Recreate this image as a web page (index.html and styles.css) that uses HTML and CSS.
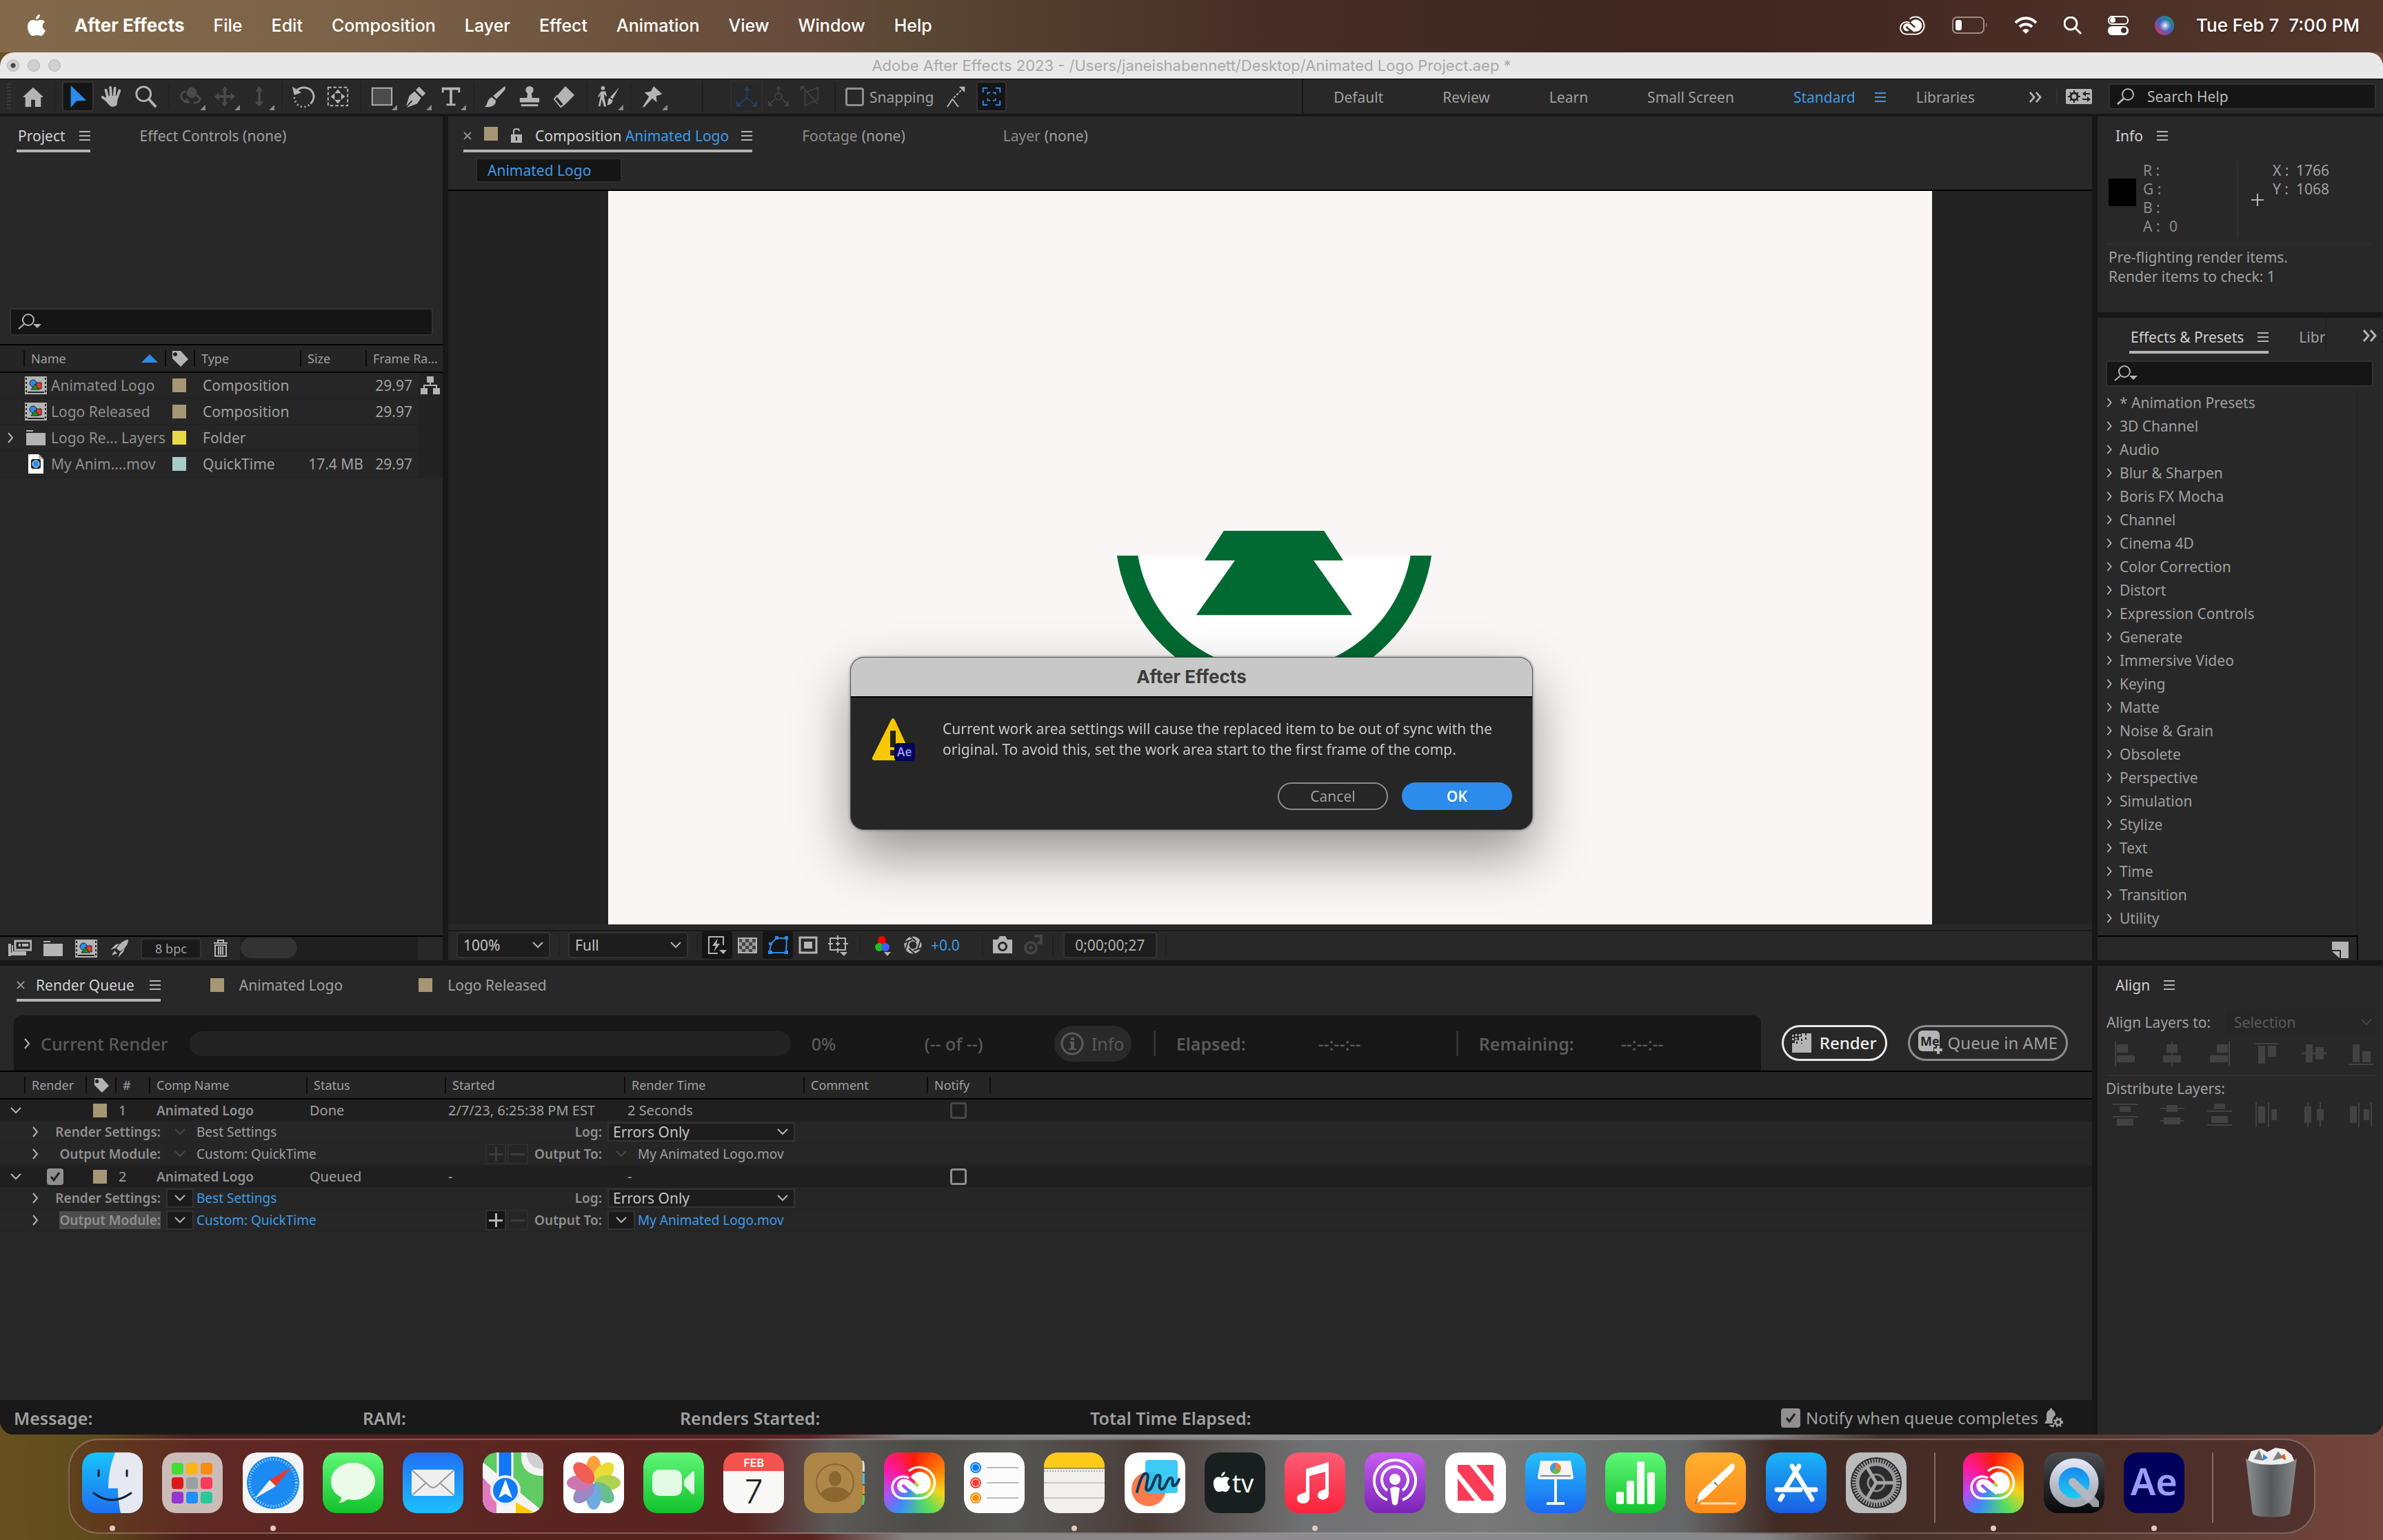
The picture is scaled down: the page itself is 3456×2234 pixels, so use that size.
FILE: index.html
```html
<!DOCTYPE html>
<html lang="en">
<head>
<meta charset="utf-8">
<meta name="viewport" content="width=device-width, initial-scale=1">
<title>Adobe After Effects 2023</title>
<link rel="stylesheet" href="styles.css">
</head>
<body>

<!-- shared icons -->
<svg class="sprite" aria-hidden="true">
  <mask id="cuts"><rect width="60" height="46" fill="#fff"/><path d="M16 27l15 13M19 13l15 13" stroke="#000" stroke-width="4" stroke-linecap="round"/></mask>
  <symbol id="burger" viewBox="0 0 16 16"><path d="M0 1h16v2H0zM0 7h16v2H0zM0 13h16v2H0z" fill="currentColor"/></symbol>
  <symbol id="right" viewBox="0 0 12 16"><path d="M3 1l6 7-6 7" fill="none" stroke="currentColor" stroke-width="2"/></symbol>
  <symbol id="down" viewBox="0 0 16 12"><path d="M1 2l7 7 7-7" fill="none" stroke="currentColor" stroke-width="2"/></symbol>
  <symbol id="more" viewBox="0 0 22 18"><path d="M2 1l7 8-7 8M12 1l7 8-7 8" fill="none" stroke="currentColor" stroke-width="3"/></symbol>
  <symbol id="close" viewBox="0 0 12 12"><path d="M1 1l10 10M11 1L1 11" stroke="currentColor" stroke-width="2"/></symbol>
  <symbol id="tag" viewBox="0 0 24 24"><path fill-rule="evenodd" fill="currentColor" d="M1 1h12l11 12-11 11L1 12zM5 3a3 3 0 1 0 .1 0z"/></symbol>
  <symbol id="find" viewBox="0 0 34 24"><circle cx="15" cy="9" r="8" fill="none" stroke="currentColor" stroke-width="2"/><path d="M9 15l-8 7" stroke="currentColor" stroke-width="2"/><path d="M22 15h12l-6 6z" fill="currentColor"/></symbol>
  <symbol id="comp" viewBox="0 0 32 26"><path fill="#b4b4b4" d="M0 0h32v26H0z"/><path d="M2 2v22M30 2v22" stroke="#222" stroke-width="2" stroke-dasharray="3 3"/><path d="M4 23h24" stroke="#222" stroke-width="2"/><path fill="#e33" stroke="#222" d="M15 9h9v9h-9z"/><circle cx="12" cy="10" r="5" fill="#2d8ceb" stroke="#222"/><path fill="#1a8f1a" stroke="#222" d="M15 11l6 8H9z"/></symbol>
  <symbol id="folder" viewBox="0 0 28 22"><path fill="#b4b4b4" d="M0 0h10v2h-10zM0 4h28v18H0z"/></symbol>
  <symbol id="cloud" viewBox="0 0 60 46"><path d="M23 8a20 20 0 1 1 15 35H16a14 14 0 1 1 7-26" fill="none" stroke="#fff" stroke-width="3"/><g mask="url(#cuts)"><circle cx="17" cy="27" r="9" fill="#fff"/><circle cx="37" cy="23" r="14" fill="#fff"/><path d="M18 22l18 13" stroke="#fff" stroke-width="8"/></g></symbol>
  <symbol id="apple" viewBox="0 0 26 32"><path fill="currentColor" d="M18 0c0 4-3 7-6 7 0-4 3-7 6-7zM13 9c2 0 4-2 7-1 2 0 4 1 5 3-5 3-4 10 1 12-2 5-4 8-7 8-2 0-3-1-5-1s-4 1-6 1C3 31 0 23 0 18 0 11 4 8 8 8c2 0 4 1 5 1z"/></symbol>
</svg>

<header class="menubar">
  <nav class="menus">
    <button aria-label="Apple menu"><svg width="26" height="32"><use href="#apple"/></svg></button>
    <button class="app">After Effects</button>
    <button>File</button>
    <button>Edit</button>
    <button>Composition</button>
    <button>Layer</button>
    <button>Effect</button>
    <button>Animation</button>
    <button>View</button>
    <button>Window</button>
    <button>Help</button>
  </nav>
  <div class="status">
    <svg width="38" height="30" viewBox="0 0 60 46"><use href="#cloud"/></svg>
    <svg width="52" height="26" viewBox="0 0 52 26"><rect x="1" y="1" width="45" height="23" rx="6" fill="none" stroke="#a08b82" stroke-width="2"/><rect x="5" y="5" width="9" height="15" rx="3" fill="#fff"/><path d="M49 9q3 3 0 7z" fill="#a08b82"/></svg>
    <svg width="34" height="26" viewBox="0 0 34 26"><g fill="none" stroke="#fff" stroke-width="4"><path d="M2 9c9-9 21-9 30 0"/><path d="M8 15c5-5 13-5 18 0"/></g><path fill="#fff" d="M17 25l-5-5q5-4 10 0z"/></svg>
    <svg width="26" height="26" viewBox="0 0 26 26"><circle cx="10" cy="10" r="9" fill="none" stroke="#fff" stroke-width="3"/><path d="M17 17l8 8" stroke="#fff" stroke-width="3"/></svg>
    <svg width="30" height="28" viewBox="0 0 30 28"><rect x="1" y="1" width="28" height="11" rx="5" fill="none" stroke="#fff" stroke-width="2"/><circle cx="7" cy="6" r="4" fill="#fff"/><rect y="15" width="30" height="13" rx="6" fill="#fff"/><circle cx="23" cy="21" r="4" fill="#432a24"/></svg>
    <svg width="28" height="28" viewBox="0 0 28 28"><defs><linearGradient id="siri" x1="0" y1="1" x2="1" y2="0"><stop offset="0" stop-color="#e8305a"/><stop offset=".5" stop-color="#465ec0"/><stop offset="1" stop-color="#0fa06a"/></linearGradient><radialGradient id="glow"><stop offset="0" stop-color="#fff"/><stop offset="1" stop-color="#8fd0f4" stop-opacity="0"/></radialGradient></defs><circle cx="14" cy="14" r="14" fill="url(#siri)"/><circle cx="15" cy="14" r="9" fill="url(#glow)"/></svg>
    <time>Tue Feb 7&nbsp; 7:00 PM</time>
  </div>
</header>

<main class="window">
  <div class="titlebar">
    <div class="lights"><i class="edited"></i><i></i><i></i></div>
    <h1>Adobe After Effects 2023 - /Users/janeishabennett/Desktop/Animated Logo Project.aep *</h1>
  </div>

  <div class="toolbar">
    <span class="grip"></span>
    <div class="tools">
      <button aria-label="Home"><svg viewBox="0 0 36 36"><path d="M18 4L2 19h4v15h9V23h6v11h9V19h4z"/></svg></button>
    </div>
    <div class="tools">
      <button class="on" aria-label="Selection"><svg viewBox="0 0 36 36"><path fill="#2d8ceb" d="M7 1l24 23-15 1-9 10z"/></svg></button>
      <button aria-label="Hand"><svg viewBox="0 0 36 36"><g fill="none" stroke="#b4b4b4" stroke-width="4" stroke-linecap="round"><path d="M12 20L9 8M17 18L16 4M22 18l1-13M26 20l4-11M12 25l-8-6"/></g><path d="M10 17h18l-2 14q-7 6-12 0l-7-8z"/></svg></button>
      <button aria-label="Zoom"><svg viewBox="0 0 36 36"><circle cx="14" cy="14" r="11" fill="none" stroke="#b4b4b4" stroke-width="3"/><path d="M22 22l11 12" stroke="#b4b4b4" stroke-width="4"/></svg></button>
    </div>
    <div class="tools dim">
      <button class="fly" aria-label="Orbit camera"><svg viewBox="0 0 36 36"><circle cx="20" cy="12" r="8"/><path d="M11 10c-10 3-10 10 0 17M27 16c8 4 8 11-4 12" fill="none" stroke="#4a4a4a" stroke-width="3"/><path d="M8 28h10l-6-8z"/></svg></button>
      <button class="fly" aria-label="Pan camera"><svg viewBox="0 0 36 36"><path d="M18 2l5 7h-3v7h7v-4l7 6-7 6v-4h-7v7h3l-5 7-5-7h3v-7H9v4l-7-6 7-6v4h7V9h-3z"/></svg></button>
      <button class="fly" aria-label="Dolly camera"><svg viewBox="0 0 36 36"><path d="M18 2l6 8h-4v16h5l-7 8-7-8h5V10h-4z"/></svg></button>
    </div>
    <div class="tools">
      <button aria-label="Rotation"><svg viewBox="0 0 36 36"><path d="M6 11c8-11 26-8 28 6 0 6-2 9-5 12" fill="none" stroke="#b4b4b4" stroke-width="3"/><path d="M1 3l3 13 11-4z"/><path d="M27 31C17 38 5 32 4 19" fill="none" stroke="#b4b4b4" stroke-width="3" stroke-dasharray="2 4"/></svg></button>
      <button aria-label="Pan behind"><svg viewBox="0 0 36 36"><rect x="3" y="4" width="30" height="28" fill="none" stroke="#b4b4b4" stroke-width="2" stroke-dasharray="5 3"/><path d="M18 7l5 6H13zM18 29l5-6H13zM7 18l6-5v10zM29 18l-6-5v10z"/></svg></button>
    </div>
    <div class="tools">
      <button class="fly" aria-label="Rectangle"><svg viewBox="0 0 36 36"><rect x="3" y="5" width="30" height="26" fill="#4b4b4b" stroke="#b4b4b4" stroke-width="2"/></svg></button>
      <button class="fly" aria-label="Pen"><svg viewBox="0 0 36 36"><path d="M22 3l10 10-5 5-10-10zM15 10l10 10-6 9-16 6 9-10-2-1-8 9 5-16z"/></svg></button>
      <button class="fly" aria-label="Type"><svg viewBox="0 0 36 36"><path d="M4 4h28v8h-3V8h-9v21h5v3H11v-3h5V8H7v4H4z"/></svg></button>
    </div>
    <div class="tools">
      <button aria-label="Brush"><svg viewBox="0 0 36 36"><path d="M33 2q2 3-1 7L20 22l-5-5zM13 19l6 5c1 8-8 11-17 10 5-3 3-12 11-15z"/></svg></button>
      <button aria-label="Clone stamp"><svg viewBox="0 0 36 36"><circle cx="18" cy="8" r="6"/><path d="M15 12h6l1 8h11v7H3v-7h11zM5 30h26v3H5z"/></svg></button>
      <button aria-label="Eraser"><svg viewBox="0 0 36 36"><path d="M20 2l14 14-15 15L7 17z"/><path d="M7 17l11 13-5 4L3 22z" fill="none" stroke="#b4b4b4" stroke-width="2"/></svg></button>
    </div>
    <div class="tools">
      <button class="fly" aria-label="Roto brush"><svg viewBox="0 0 36 36"><circle cx="10" cy="5" r="3"/><path d="M7 10h7l2 7-1 1-3-4v6l3 13-3 1-4-12-2 11H3l3-14v-5l-2 5-2-1z"/><path d="M35 4L25 22l-4-3zM20 20l5 4c-1 6-6 7-9 7 3-3 0-8 4-11z"/></svg></button>
    </div>
    <div class="tools">
      <button class="fly" aria-label="Puppet pin"><svg viewBox="0 0 36 36"><path d="M20 2l13 12-4 2-5 1 1 10-7-6L6 34l-3 1 2-4 8-13-7-6 10-2z"/></svg></button>
    </div>
    <div class="axes">
      <button class="axis" aria-label="Local axis"><svg viewBox="0 0 36 36" class="navy"><path d="M18 4v16L5 31M18 20l13 11" fill="none" stroke="#1d4166" stroke-width="2"/><path d="M13 9l5-7 5 7zM2 25v9h9zM34 25v9h-9z"/></svg></button>
      <button aria-label="World axis"><svg viewBox="0 0 36 36" class="faint"><path d="M18 4v10M12 22l-8 8M24 22l8 8" stroke="#404040" stroke-width="2"/><circle cx="18" cy="18" r="5" fill="none" stroke="#404040" stroke-width="2"/><path d="M14 7l4-6 4 6zM2 24v9h8zM34 24v9h-8z"/></svg></button>
      <button aria-label="View axis"><svg viewBox="0 0 36 36" class="faint"><path d="M10 12L30 4v18L10 32zM5 2l25 28" fill="none" stroke="#404040" stroke-width="2"/><path d="M2 2h8l-7 8z"/></svg></button>
    </div>
    <div class="snap">
      <input type="checkbox" id="snapping"><label for="snapping">Snapping</label>
      <button aria-label="Snap edges"><svg viewBox="0 0 36 36"><path d="M4 34l8-12 9 12" fill="none" stroke="#b4b4b4" stroke-width="2"/><path d="M14 20L28 6" stroke="#b4b4b4" stroke-width="2" stroke-dasharray="4 2"/><path d="M22 3h9v9z"/></svg></button>
      <button class="on" aria-label="Snap to features"><svg viewBox="0 0 36 36"><g fill="none" stroke="#2d8ceb" stroke-width="2"><path d="M5 12V5h7M24 5h7v7M31 24v7h-7M12 31H5v-7"/><path d="M12 15v-3h4M20 12h4v3M24 21v3h-4M16 24h-4v-3"/></g></svg></button>
    </div>
    <nav class="workspaces">
      <button>Default</button>
      <button>Review</button>
      <button>Learn</button>
      <button>Small Screen</button>
      <button class="current">Standard <svg width="16" height="16"><use href="#burger"/></svg></button>
      <button class="last">Libraries</button>
      <button class="overflow" aria-label="More workspaces"><svg width="20" height="16"><use href="#more"/></svg></button>
    </nav>
    <button class="sync" aria-label="Workspace settings"><svg width="38" height="22" viewBox="0 0 38 22"><rect width="38" height="22" rx="2" fill="#b4b4b4"/><circle cx="12" cy="11" r="5" fill="none" stroke="#222" stroke-width="3"/><path d="M12 2v4M12 16v4M3 11h4M17 11h4M6 5l3 3M15 14l3 3M18 5l-3 3M9 14l-3 3" stroke="#222" stroke-width="2"/><path d="M35 7h-8M24 15h8" stroke="#222" stroke-width="2"/><path d="M29 3v8l-5-4zM31 11v8l5-4z" fill="#222"/></svg></button>
    <label class="searchbox help">
      <svg width="26" height="24" viewBox="0 0 26 24"><circle cx="16" cy="9" r="8" fill="none" stroke="#b4b4b4" stroke-width="2"/><path d="M10 15l-9 8" stroke="#b4b4b4" stroke-width="3"/></svg>
      <input type="search" placeholder="Search Help" aria-label="Search Help">
    </label>
  </div>

  <div class="workarea">
    <section class="panel project">
      <div class="tabs">
        <button class="tab active">Project <svg width="16" height="16"><use href="#burger"/></svg></button>
        <button class="tab wide">Effect Controls (none)</button>
      </div>
      <div class="blank"></div>
      <label class="searchbox">
        <svg width="34" height="24"><use href="#find"/></svg>
        <input type="search" aria-label="Search project">
      </label>
      <table class="files">
        <colgroup><col class="c-twirl"><col class="c-name"><col class="c-label"><col class="c-type"><col class="c-size"><col class="c-rate"><col></colgroup>
        <thead>
          <tr>
            <th></th>
            <th><span class="sort">Name <svg width="24" height="12" viewBox="0 0 24 12"><path fill="#2d8ceb" d="M12 0l12 12H0z"/></svg></span></th>
            <th class="tagcell"><svg width="24" height="24"><use href="#tag"/></svg></th>
            <th>Type</th>
            <th>Size</th>
            <th colspan="2">Frame Ra...</th>
          </tr>
        </thead>
        <tbody>
          <tr>
            <td></td>
            <td><span class="file"><svg width="32" height="26"><use href="#comp"/></svg>Animated Logo</span></td>
            <td class="tagcell"><i class="swatch"></i></td>
            <td>Composition</td><td></td><td class="num">29.97</td>
            <td class="flow"><svg width="28" height="26" viewBox="0 0 28 26"><path fill="#b4b4b4" d="M9 0h10v9H9zM0 17h10v9H0zM18 17h10v9H18z"/><path d="M14 8v5M5 18v-5h18v5" fill="none" stroke="#b4b4b4" stroke-width="2"/></svg></td>
          </tr>
          <tr>
            <td></td>
            <td><span class="file"><svg width="32" height="26"><use href="#comp"/></svg>Logo Released</span></td>
            <td class="tagcell"><i class="swatch"></i></td>
            <td>Composition</td><td></td><td class="num">29.97</td><td class="flow"></td>
          </tr>
          <tr>
            <td class="twirl"><svg width="12" height="16"><use href="#right"/></svg></td>
            <td><span class="file"><svg width="32" height="22" viewBox="-2 0 32 22"><path fill="#b4b4b4" d="M0 0h10v2H0zM0 4h28v18H0z"/></svg>Logo Re... Layers</span></td>
            <td class="tagcell"><i class="swatch yellow"></i></td>
            <td>Folder</td><td></td><td></td><td class="flow"></td>
          </tr>
          <tr>
            <td></td>
            <td><span class="file"><svg width="32" height="28" viewBox="-4 0 32 28"><path fill="#fff" d="M1 0h15l7 7v21H1z"/><path fill="#bbb" d="M16 0l7 7h-7z"/><rect x="5" y="7" width="14" height="14" rx="3" fill="#222"/><circle cx="12" cy="14" r="5" fill="#2d8ceb" stroke="#dff"/></svg>My Anim....mov</span></td>
            <td class="tagcell"><i class="swatch aqua"></i></td>
            <td>QuickTime</td><td class="size">17.4 MB</td><td class="num">29.97</td><td class="flow"></td>
          </tr>
        </tbody>
      </table>
      <div class="files-rest"></div>
      <div class="project-foot">
        <button aria-label="Interpret footage"><svg width="34" height="26" viewBox="0 0 34 26"><rect x="10" y="2" width="23" height="13" fill="none" stroke="#b4b4b4" stroke-width="3"/><path d="M15 8h3M20 8h9M2 6v18M2 21h24" stroke="#b4b4b4" stroke-width="4"/><path d="M6 8v10h20" fill="none" stroke="#b4b4b4" stroke-width="2"/></svg></button>
        <button aria-label="New folder"><svg width="28" height="22"><use href="#folder"/></svg></button>
        <button aria-label="New composition"><svg width="34" height="26"><use href="#comp"/></svg></button>
        <button aria-label="Project settings"><svg width="28" height="26" viewBox="0 0 28 26"><path fill="#b4b4b4" d="M27 0c0 8-5 13-12 17l-5-4C14 6 20 1 27 0zM9 12l-8 3 8-8 5-1zM15 19l-3 7 8-8 2-6zM7 16l4 4-8 3z"/></svg></button>
        <button class="bpc">8 bpc</button>
        <button aria-label="Delete"><svg width="22" height="26" viewBox="0 0 22 26"><path d="M1 5h20M7 5V1h8v4M3 8h16v16H3zM8 10v12M14 10v12M11 10v12" fill="none" stroke="#b4b4b4" stroke-width="2"/></svg></button>
        <div class="hscroll"><i></i></div>
      </div>
    </section>

    <section class="panel viewer">
      <div class="tabs">
        <button class="tab active comp-tab"><svg width="12" height="12"><use href="#close"/></svg><i class="swatch"></i><svg width="18" height="22" viewBox="0 0 18 22"><path fill-rule="evenodd" fill="#b4b4b4" d="M1 9h16v12H1zM8 12v6h2v-6z"/><path d="M5 9V4q0-3 4-3t4 3" fill="none" stroke="#b4b4b4" stroke-width="2"/></svg><span>Composition <b>Animated Logo</b></span><svg width="16" height="16"><use href="#burger"/></svg></button>
        <button class="tab wide footage">Footage <em>(none)</em></button>
        <button class="tab wide layer">Layer <em>(none)</em></button>
      </div>
      <div class="crumbs"><button>Animated Logo</button></div>
      <div class="stage">
        <svg class="canvas" viewBox="0 0 1920 1062" preserveAspectRatio="xMidYMid slice">
          <rect width="1920" height="1062" fill="#f9f6f5"/>
          <clipPath id="lower"><path d="M600 528h800v400H600z"/></clipPath>
          <circle cx="966" cy="495" r="215" fill="#fff" stroke="#006a32" stroke-width="30" clip-path="url(#lower)"/>
          <path fill="#006a32" d="M893 492h145l28 43h-43l56 79H853l56-79h-44z"/>
        </svg>
      </div>
      <div class="viewer-foot">
        <select class="zoom" aria-label="Magnification"><option>100%</option></select>
        <i class="bar"></i>
        <select class="res" aria-label="Resolution"><option>Full</option></select>
        <i class="bar"></i>
        <button class="pressed" aria-label="Fast previews"><svg viewBox="0 0 32 32"><path d="M25 16V4H4v24h13" fill="none" stroke="#b4b4b4" stroke-width="2"/><path fill="#b4b4b4" d="M17 6l-8 11h5l-3 9 9-12h-5zM19 23h11l-5 6z"/></svg></button>
        <button aria-label="Transparency grid"><svg viewBox="0 0 32 32"><rect x="3" y="6" width="26" height="21" fill="#444" stroke="#b4b4b4" stroke-width="2"/><path fill="#999" d="M8 7h5v5H8zM18 7h5v5h-5zM4 12h4v5H4zM13 12h5v5h-5zM23 12h5v5h-5zM8 17h5v5H8zM18 17h5v5h-5zM4 22h4v4H4zM13 22h5v4h-5zM23 22h5v4h-5z"/></svg></button>
        <button class="pressed" aria-label="Masks"><svg viewBox="0 0 32 32"><path d="M4 27l2-13 8-8h15l-1 21z" fill="none" stroke="#2d8ceb" stroke-width="2"/><path fill="#2d8ceb" d="M2 24h6v5H2zM26 24h5v5h-5zM26 3h5v5h-5zM12 3h5v5h-5zM3 12h5v4H3z"/></svg></button>
        <button aria-label="Region of interest"><svg viewBox="0 0 32 32"><rect x="4" y="5" width="24" height="22" fill="none" stroke="#b4b4b4" stroke-width="3"/><path fill="#b4b4b4" d="M10 11h12v10H10z"/></svg></button>
        <button aria-label="Guides"><svg viewBox="0 0 32 32"><path d="M4 6h22v17H4zM15 2v7M15 20v7M1 14h7M23 14h7M12 14h6M15 11v6" fill="none" stroke="#b4b4b4" stroke-width="2"/><path fill="#b4b4b4" d="M18 26h11l-5 6z"/></svg></button>
        <i class="bar wide"></i>
        <button aria-label="Channels"><svg viewBox="0 0 32 32"><circle cx="15" cy="9" r="6" fill="#f00"/><circle cx="11" cy="19" r="6" fill="#1fc01f"/><circle cx="20" cy="19" r="6" fill="#3f5fff"/><path fill="#b4b4b4" d="M18 26h10l-5 6z"/></svg></button>
        <button aria-label="Reset exposure"><svg viewBox="0 0 32 32"><circle cx="16" cy="16" r="9" fill="none" stroke="#b4b4b4" stroke-width="7"/><path d="M12 3l9 8M27 9l-4 12M29 20l-12 4M19 29l-9-8M5 23l4-12M4 12l11-4" stroke="#282828" stroke-width="2"/></svg></button>
        <a href="#" class="expo">+0.0</a>
        <i class="bar"></i>
        <button aria-label="Snapshot"><svg viewBox="0 0 32 32"><path fill-rule="evenodd" fill="#b4b4b4" d="M2 8h7l3-5h8l3 5h7v20H2zM16 11a7 7 0 1 0 .1 0z"/><circle cx="16" cy="18" r="4" fill="#b4b4b4"/></svg></button>
        <button aria-label="Show snapshot"><svg viewBox="0 0 32 32"><circle cx="13" cy="20" r="8" fill="none" stroke="#444" stroke-width="4"/><circle cx="13" cy="20" r="3" fill="#444"/><path d="M18 3h10v10h-6" fill="none" stroke="#444" stroke-width="4"/></svg></button>
        <i class="bar"></i>
        <button class="timecode">0;00;00;27</button>
        <i class="bar"></i>
      </div>
    </section>

    <section class="panel info">
      <div class="tabs"><button class="tab solo">Info <svg width="16" height="16"><use href="#burger"/></svg></button></div>
      <div class="readout">
        <i class="black"></i>
        <dl class="rgba"><dt>R :</dt><dd></dd><dt>G :</dt><dd></dd><dt>B :</dt><dd></dd><dt>A :</dt><dd>0</dd></dl>
        <svg class="cross" width="18" height="18" viewBox="0 0 18 18"><path d="M9 0v18M0 9h18" stroke="#b4b4b4" stroke-width="2"/></svg>
        <dl class="xy"><dt>X :</dt><dd>1766</dd><dt>Y :</dt><dd>1068</dd></dl>
      </div>
      <p>Pre-flighting render items.<br>Render items to check: 1</p>
    </section>

    <section class="panel effects">
      <div class="tabs">
        <button class="tab active">Effects &amp; Presets <svg width="16" height="16"><use href="#burger"/></svg></button>
        <button class="tab cut">Libr</button>
        <button class="overflow" aria-label="More panels"><svg width="22" height="18"><use href="#more"/></svg></button>
      </div>
      <label class="searchbox">
        <svg width="34" height="24"><use href="#find"/></svg>
        <input type="search" aria-label="Search effects">
      </label>
      <ul class="effect-list">
        <li><svg><use href="#right"/></svg>* Animation Presets</li>
        <li><svg><use href="#right"/></svg>3D Channel</li>
        <li><svg><use href="#right"/></svg>Audio</li>
        <li><svg><use href="#right"/></svg>Blur &amp; Sharpen</li>
        <li><svg><use href="#right"/></svg>Boris FX Mocha</li>
        <li><svg><use href="#right"/></svg>Channel</li>
        <li><svg><use href="#right"/></svg>Cinema 4D</li>
        <li><svg><use href="#right"/></svg>Color Correction</li>
        <li><svg><use href="#right"/></svg>Distort</li>
        <li><svg><use href="#right"/></svg>Expression Controls</li>
        <li><svg><use href="#right"/></svg>Generate</li>
        <li><svg><use href="#right"/></svg>Immersive Video</li>
        <li><svg><use href="#right"/></svg>Keying</li>
        <li><svg><use href="#right"/></svg>Matte</li>
        <li><svg><use href="#right"/></svg>Noise &amp; Grain</li>
        <li><svg><use href="#right"/></svg>Obsolete</li>
        <li><svg><use href="#right"/></svg>Perspective</li>
        <li><svg><use href="#right"/></svg>Simulation</li>
        <li><svg><use href="#right"/></svg>Stylize</li>
        <li><svg><use href="#right"/></svg>Text</li>
        <li><svg><use href="#right"/></svg>Time</li>
        <li><svg><use href="#right"/></svg>Transition</li>
        <li><svg><use href="#right"/></svg>Utility</li>
      </ul>
      <div class="effects-foot"><button aria-label="New preset"><svg width="24" height="24" viewBox="0 0 24 24"><path fill="#b4b4b4" d="M0 0h24v24H13V12H0zM0 14h11v10z"/></svg></button></div>
    </section>

    <section class="panel queue">
      <div class="tabs">
        <button class="tab active queue-tab"><svg width="12" height="12"><use href="#close"/></svg>Render Queue <svg width="16" height="16"><use href="#burger"/></svg></button>
        <button class="tab comp-name"><i class="swatch"></i>Animated Logo</button>
        <button class="tab comp-name"><i class="swatch"></i>Logo Released</button>
      </div>
      <div class="current-render">
        <div class="progress">
          <svg width="12" height="16"><use href="#right"/></svg>
          <b class="title">Current Render</b>
          <div class="track"></div>
          <b class="pct">0%</b>
          <b class="count">(-- of --)</b>
          <button class="pill" disabled><svg width="36" height="36" viewBox="0 0 36 36"><circle cx="18" cy="18" r="15" fill="none" stroke="#5a5a5a" stroke-width="3"/><path d="M16 9h5v4h-5zM14 15h7v10h3v2H13v-2h3v-8h-2z" fill="#5a5a5a"/></svg>Info</button>
          <i class="rule"></i>
          <b class="elapsed">Elapsed:</b><b class="clock">--:--:--</b>
          <i class="rule"></i>
          <b class="elapsed">Remaining:</b><b class="clock">--:--:--</b>
        </div>
        <button class="render"><svg width="28" height="28" viewBox="0 0 28 28"><path fill="#b4b4b4" d="M14 0h14v28H0V14h4v-4h6V5h4z"/><path d="M1 2v10M6 1v8M11 1v4" stroke="#b4b4b4" stroke-width="3" stroke-dasharray="3 2"/><path d="M20 0v9M14 8v7M7 12v6" stroke="#222" stroke-width="2" stroke-dasharray="3 3"/></svg>Render</button>
        <button class="ame"><svg width="36" height="36" viewBox="0 0 36 36"><rect width="31" height="30" rx="6" fill="#b4b4b4"/><text x="3" y="22" font-size="18" font-weight="700" fill="#222">Me</text><path d="M29 21v14M22 28h14" stroke="#282828" stroke-width="8"/><path d="M29 22v12M23 28h12" stroke="#b4b4b4" stroke-width="4"/></svg>Queue in AME</button>
      </div>
      <table class="jobs">
        <colgroup><col class="j-twirl"><col class="j-render"><col class="j-label"><col class="j-no"><col class="j-name"><col class="j-status"><col class="j-start"><col class="j-time"><col class="j-comment"><col class="j-notify"><col></colgroup>
        <thead>
          <tr><th></th><th>Render</th><th class="tagcell"><svg width="22" height="22"><use href="#tag"/></svg></th><th>#</th><th>Comp Name</th><th>Status</th><th>Started</th><th>Render Time</th><th>Comment</th><th>Notify</th><th></th></tr>
        </thead>
        <tbody>
          <tr class="item">
            <td class="twirl"><svg width="16" height="12"><use href="#down"/></svg></td><td></td><td class="tagcell"><i class="swatch"></i></td><td>1</td><td><b>Animated Logo</b></td><td>Done</td><td>2/7/23, 6:25:38 PM EST</td><td>2 Seconds</td><td></td>
            <td class="box"><input type="checkbox" disabled aria-label="Notify for item 1"></td><td></td>
          </tr>
          <tr><td colspan="11"><div class="sub">
            <svg width="12" height="16"><use href="#right"/></svg><b>Render Settings:</b>
            <span class="choice"><button class="mini off" disabled aria-label="Render settings"><svg width="16" height="12"><use href="#down"/></svg></button>Best Settings</span>
            <span class="out"><label for="log1">Log:</label></span><select id="log1"><option>Errors Only</option></select>
          </div></td></tr>
          <tr><td colspan="11"><div class="sub">
            <svg width="12" height="16"><use href="#right"/></svg><b>Output Module:</b>
            <span class="choice"><button class="mini off" disabled aria-label="Output module"><svg width="16" height="12"><use href="#down"/></svg></button>Custom: QuickTime</span>
            <span class="out"><button class="step off" disabled aria-label="Add output"><i class="plus"></i></button><button class="step off" disabled aria-label="Remove output"><i class="minus"></i></button><b>Output To:</b></span>
            <span class="choice"><button class="mini off" disabled aria-label="Output path"><svg width="16" height="12"><use href="#down"/></svg></button>My Animated Logo.mov</span>
          </div></td></tr>
          <tr class="item">
            <td class="twirl"><svg width="16" height="12"><use href="#down"/></svg></td><td class="check"><input type="checkbox" checked aria-label="Render item 2"></td><td class="tagcell"><i class="swatch"></i></td><td>2</td><td><b>Animated Logo</b></td><td>Queued</td><td>-</td><td>-</td><td></td>
            <td class="box"><input type="checkbox" aria-label="Notify for item 2"></td><td></td>
          </tr>
          <tr><td colspan="11"><div class="sub">
            <svg width="12" height="16"><use href="#right"/></svg><b>Render Settings:</b>
            <span class="choice"><button class="mini" aria-label="Render settings"><svg width="16" height="12"><use href="#down"/></svg></button><a href="#">Best Settings</a></span>
            <span class="out"><label for="log2">Log:</label></span><select id="log2"><option>Errors Only</option></select>
          </div></td></tr>
          <tr><td colspan="11"><div class="sub">
            <svg width="12" height="16"><use href="#right"/></svg><b class="picked">Output Module:</b>
            <span class="choice"><button class="mini" aria-label="Output module"><svg width="16" height="12"><use href="#down"/></svg></button><a href="#">Custom: QuickTime</a></span>
            <span class="out"><button class="step" aria-label="Add output"><i class="plus"></i></button><button class="step off" disabled aria-label="Remove output"><i class="minus"></i></button><b>Output To:</b></span>
            <span class="choice"><button class="mini" aria-label="Output path"><svg width="16" height="12"><use href="#down"/></svg></button><a href="#">My Animated Logo.mov</a></span>
          </div></td></tr>
        </tbody>
      </table>
      <div class="queue-foot">
        <b>Message:</b><b>RAM:</b><b>Renders Started:</b><b>Total Time Elapsed:</b>
        <span class="notify"><input type="checkbox" id="notify" checked><label for="notify">Notify when queue completes</label>
        <svg width="28" height="28" viewBox="0 0 28 28"><path fill="#a0a0a0" d="M1 22l3-5V9q0-5 5-7V0h3v2q5 2 5 8-6 4-4 12zM8 24h7v3q-5 1-7-3z"/><circle cx="21" cy="20" r="4" fill="none" stroke="#a0a0a0" stroke-width="3"/><circle cx="21" cy="20" r="6" fill="none" stroke="#a0a0a0" stroke-width="3" stroke-dasharray="2 3"/></svg></span>
      </div>
    </section>

    <section class="panel align">
      <div class="tabs"><button class="tab solo">Align <svg width="16" height="16"><use href="#burger"/></svg></button></div>
      <div class="align-to"><label for="alignto">Align Layers to:</label><select id="alignto" disabled><option>Selection</option></select></div>
      <div class="align-row">
        <button disabled aria-label="Align left"><svg viewBox="0 0 36 36"><path d="M3 0h2v36H3zM6 4h16v12H6zM6 20h26v10H6z"/></svg></button>
        <button disabled aria-label="Align center"><svg viewBox="0 0 36 36"><path d="M17 0h2v36h-2zM10 4h16v12H10zM5 20h26v10H5z"/></svg></button>
        <button disabled aria-label="Align right"><svg viewBox="0 0 36 36"><path d="M31 0h2v36h-2zM14 4h16v12H14zM4 20h26v10H4z"/></svg></button>
        <button disabled aria-label="Align top"><svg viewBox="0 0 36 36"><path d="M0 2h36v2H0zM6 6h10v26H6zM20 6h12v16H20z"/></svg></button>
        <button disabled aria-label="Align middle"><svg viewBox="0 0 36 36"><path d="M0 16h36v2H0zM6 4h10v26H6zM20 8h12v18H20z"/></svg></button>
        <button disabled aria-label="Align bottom"><svg viewBox="0 0 36 36"><path d="M0 32h36v2H0zM6 4h10v26H6zM20 14h12v16H20z"/></svg></button>
      </div>
      <h2>Distribute Layers:</h2>
      <div class="align-row">
        <button disabled aria-label="Distribute top"><svg viewBox="0 0 36 36"><path d="M0 2h36v2H0zM10 6h16v8H10zM0 20h36v2H0zM6 24h24v10H6z"/></svg></button>
        <button disabled aria-label="Distribute vertical centers"><svg viewBox="0 0 36 36"><path d="M0 8h36v2H0zM10 4h16v10H10zM0 26h36v2H0zM6 22h24v10H6z"/></svg></button>
        <button disabled aria-label="Distribute bottom"><svg viewBox="0 0 36 36"><path d="M0 12h36v2H0zM10 2h16v8H10zM0 32h36v2H0zM6 20h24v10H6z"/></svg></button>
        <button disabled aria-label="Distribute left"><svg viewBox="0 0 36 36"><path d="M2 0h2v36H2zM6 6h10v24H6zM20 0h2v36h-2zM25 10h8v16h-8z"/></svg></button>
        <button disabled aria-label="Distribute horizontal centers"><svg viewBox="0 0 36 36"><path d="M8 0h2v36H8zM4 6h10v24H4zM26 0h2v36h-2zM22 10h10v16H22z"/></svg></button>
        <button disabled aria-label="Distribute right"><svg viewBox="0 0 36 36"><path d="M14 0h2v36h-2zM2 6h10v24H2zM32 0h2v36h-2zM22 10h8v16h-8z"/></svg></button>
      </div>
    </section>
  </div>
</main>

<section class="alert" role="alertdialog" aria-labelledby="alert-title">
  <h2 id="alert-title">After Effects</h2>
  <div class="alert-body">
    <svg width="62" height="64" viewBox="0 0 62 64"><path fill="#f5c800" d="M27 3q3-6 6 0l25 54q1 4-3 4H3q-4 0-3-4z"/><path fill="#222" d="M26 18h8v24h-8zM26 46h8v8h-8z"/><rect x="32" y="36" width="30" height="26" rx="5" fill="#00005b"/><text x="36" y="55" font-size="17" font-weight="600" fill="#9b9bff">Ae</text></svg>
    <p>Current work area settings will cause the replaced item to be out of sync with the original. To avoid this, set the work area start to the first frame of the comp.</p>
  </div>
  <div class="alert-buttons">
    <button>Cancel</button>
    <button class="ok">OK</button>
  </div>
</section>

<footer class="dock">
  <a href="#" class="running" aria-label="Finder"><svg viewBox="0 0 88 88"><defs><linearGradient id="gfind" x2="0" y2="1"><stop stop-color="#17c3fb"/><stop offset="1" stop-color="#1e6ff0"/></linearGradient><clipPath id="sq"><rect width="88" height="88" rx="20"/></clipPath></defs><g clip-path="url(#sq)"><path fill="url(#gfind)" d="M0 0h88v88H0z"/><path fill="#e7e9f2" d="M48 0h40v88H56q-4-16-4-36H38Q38 24 48 0z"/><path d="M24 26v8M65 26v8M17 59q26 20 54 0" fill="none" stroke="#123" stroke-width="3" stroke-linecap="round"/></g></svg></a>
  <a href="#" aria-label="Launchpad"><svg viewBox="0 0 88 88"><rect width="88" height="88" rx="20" fill="#cbbcb8"/><g><rect x="14" y="15" width="17" height="17" rx="4" fill="#44dc36"/><rect x="35" y="15" width="17" height="17" rx="4" fill="#fdb515"/><rect x="56" y="15" width="17" height="17" rx="4" fill="#f98a12"/><rect x="14" y="36" width="17" height="17" rx="4" fill="#d91a1a"/><rect x="35" y="36" width="17" height="17" rx="4" fill="#9aa0a2"/><rect x="56" y="36" width="17" height="17" rx="4" fill="#fa3a58"/><rect x="14" y="57" width="17" height="17" rx="4" fill="#9436cf"/><rect x="35" y="57" width="17" height="17" rx="4" fill="#1e8ffb"/><rect x="56" y="57" width="17" height="17" rx="4" fill="#26c99a"/></g></svg></a>
  <a href="#" class="running" aria-label="Safari"><svg viewBox="0 0 88 88"><rect width="88" height="88" rx="20" fill="#f4f4f4"/><circle cx="44" cy="44" r="38" fill="#1b8af2"/><circle cx="44" cy="44" r="34" fill="none" stroke="#bfe2ff" stroke-width="4" stroke-dasharray="1 3"/><path fill="#e9392f" d="M71 21L48 49l-9-9z"/><path fill="#f2f2f2" d="M17 67l22-27 9 9z"/></svg></a>
  <a href="#" aria-label="Messages"><svg viewBox="0 0 88 88"><defs><linearGradient id="ggreen" x2="0" y2="1"><stop stop-color="#5ff777"/><stop offset="1" stop-color="#12c32c"/></linearGradient></defs><rect width="88" height="88" rx="20" fill="url(#ggreen)"/><path fill="#eafbea" d="M44 15c18 0 32 12 32 27S62 69 44 69l-8-1q-6 5-13 5 4-3 4-8C17 60 12 52 12 42c0-15 14-27 32-27z"/></svg></a>
  <a href="#" aria-label="Mail"><svg viewBox="0 0 88 88"><defs><linearGradient id="gmail" x2="0" y2="1"><stop stop-color="#2070f2"/><stop offset="1" stop-color="#1cc0fd"/></linearGradient></defs><rect width="88" height="88" rx="20" fill="url(#gmail)"/><rect x="13" y="25" width="62" height="38" rx="3" fill="#efeff0"/><path d="M14 26l25 23q5 4 10 0l25-23M14 62l20-18M74 62L54 44" fill="none" stroke="#999" stroke-width="2"/></svg></a>
  <a href="#" aria-label="Maps"><svg viewBox="0 0 88 88"><g clip-path="url(#sq)"><path fill="#5ecb63" d="M0 0h88v88H0z"/><path fill="#f4f4f4" d="M0 14l88 72v2H0zM56 0v6c0 20 14 28 32 28V0z"/><path fill="#cfcfd4" d="M64 0c0 16 10 24 24 24V0z"/><path fill="#e07ac0" d="M0 36l20 22v30H0z"/><path fill="#ffcb08" d="M48 88V72l28 16z"/><path fill="#1177f5" stroke="#fff" stroke-width="3" d="M22-2h21v50H22z"/><circle cx="33" cy="55" r="20" fill="#0e7cf6" stroke="#eee" stroke-width="4"/><path fill="#fff" d="M33 39l10 27-10-6-10 6z"/></g></svg></a>
  <a href="#" aria-label="Photos"><svg viewBox="0 0 88 88"><rect width="88" height="88" rx="20" fill="#fff"/><g opacity=".88"><ellipse cx="44" cy="24" rx="11" ry="19" fill="#fb9422"/><ellipse cx="44" cy="24" rx="11" ry="19" fill="#e8d81c" transform="rotate(45 44 44)"/><ellipse cx="44" cy="24" rx="11" ry="19" fill="#a5cc3a" transform="rotate(90 44 44)"/><ellipse cx="44" cy="24" rx="11" ry="19" fill="#54b77e" transform="rotate(135 44 44)"/><ellipse cx="44" cy="24" rx="11" ry="19" fill="#5a9fdc" transform="rotate(180 44 44)"/><ellipse cx="44" cy="24" rx="11" ry="19" fill="#8a78bc" transform="rotate(225 44 44)"/><ellipse cx="44" cy="24" rx="11" ry="19" fill="#c564a4" transform="rotate(270 44 44)"/><ellipse cx="44" cy="24" rx="11" ry="19" fill="#f0483c" transform="rotate(315 44 44)"/></g></svg></a>
  <a href="#" aria-label="FaceTime"><svg viewBox="0 0 88 88"><rect width="88" height="88" rx="20" fill="url(#ggreen)"/><rect x="13" y="25" width="43" height="38" rx="10" fill="#e2fae4"/><path fill="#e2fae4" d="M59 40l12-12q3-2 3 2v28q0 4-3 2L59 48z"/></svg></a>
  <a href="#" aria-label="Calendar"><div class="calendar"><span>FEB</span><b>7</b></div></a>
  <a href="#" aria-label="Contacts"><svg viewBox="0 0 88 88"><path fill="#ddd" d="M82 12h6v16h-6z"/><path fill="#47b8f5" d="M82 30h6v16h-6z"/><path fill="#fb9022" d="M82 48h6v12h-6z"/><path fill="#4cd964" d="M82 62h6v14h-6z"/><rect width="85" height="88" rx="18" fill="#ad8648"/><circle cx="45" cy="44" r="27" fill="none" stroke="#89672f" stroke-width="2"/><ellipse cx="45" cy="38" rx="9" ry="11" fill="#89672f"/><path fill="#89672f" d="M24 60q6-10 21-10t21 10q-8 11-21 11T24 60z"/></svg></a>
  <a href="#" aria-label="Creative Cloud"><div class="rainbow"><svg viewBox="0 0 60 46"><use href="#cloud"/></svg></div></a>
  <a href="#" aria-label="Reminders"><svg viewBox="0 0 88 88"><rect width="88" height="88" rx="20" fill="#fbfbfb"/><path d="M33 22h46M33 44h46M33 66h46" stroke="#bbb" stroke-width="2"/><g stroke-width="2"><circle cx="17" cy="22" r="5" fill="#0a7bf5"/><circle cx="17" cy="22" r="7" fill="none" stroke="#0a7bf5"/><circle cx="17" cy="44" r="5" fill="#f33b30"/><circle cx="17" cy="44" r="7" fill="none" stroke="#f33b30"/><circle cx="17" cy="66" r="5" fill="#f79006"/><circle cx="17" cy="66" r="7" fill="none" stroke="#f79006"/></g></svg></a>
  <a href="#" class="running" aria-label="Notes"><svg viewBox="0 0 88 88"><g clip-path="url(#sq)"><path fill="#f1f0ed" d="M0 0h88v88H0z"/><path fill="#fdca18" d="M0 0h88v22H0z"/><path d="M0 23h88" stroke="#9d8f55" stroke-width="2"/><path d="M0 27h88" stroke="#aaa" stroke-width="2" stroke-dasharray="2 2"/><path d="M0 44h88M0 66h88" stroke="#c8c8c6" stroke-width="2"/></g></svg></a>
  <a href="#" aria-label="Freeform"><svg viewBox="0 0 88 88"><rect width="88" height="88" rx="20" fill="#fff"/><circle cx="35" cy="53" r="25" fill="#fb7a4e"/><rect x="30" y="11" width="47" height="48" rx="4" fill="#28c4f4" opacity=".9"/><path d="M18 57c3-12 8-29 14-26s-6 25 2 24 8-22 15-22-3 18 4 20 8-17 14-16-1 13 5 11 5-6 7-9" fill="none" stroke="#0c3c5c" stroke-width="4" stroke-linecap="round"/></svg></a>
  <a href="#" aria-label="TV"><svg viewBox="0 0 88 88"><rect width="88" height="88" rx="20" fill="#17201f"/><svg x="12" y="28" width="26" height="30" color="#fff"><use href="#apple"/></svg><text x="40" y="58" font-size="36" font-weight="400" fill="#fff">tv</text></svg></a>
  <a href="#" class="running" aria-label="Music"><svg viewBox="0 0 88 88"><defs><linearGradient id="gmusic" x2="0" y2="1"><stop stop-color="#fb5c74"/><stop offset="1" stop-color="#fa233b"/></linearGradient></defs><rect width="88" height="88" rx="20" fill="url(#gmusic)"/><path fill="#fff" d="M31 24l33-10v46c0 11-16 11-16 2 0-7 8-7 11-9V28l-23 6v32c0 11-18 10-18 1 0-8 10-7 13-10z"/></svg></a>
  <a href="#" aria-label="Podcasts"><svg viewBox="0 0 88 88"><defs><linearGradient id="gpod" x2="0" y2="1"><stop stop-color="#c75df0"/><stop offset="1" stop-color="#7924b6"/></linearGradient></defs><rect width="88" height="88" rx="20" fill="url(#gpod)"/><g fill="none" stroke="#fff" stroke-width="4"><path d="M33 69a30 30 0 1 1 22 0"/><path d="M33 55a19 19 0 1 1 22 0"/></g><circle cx="44" cy="39" r="8" fill="#fff"/><path fill="#fff" d="M37 52q7-5 14 0l-3 22q-4 6-8 0z"/></svg></a>
  <a href="#" aria-label="News"><svg viewBox="0 0 88 88"><rect width="88" height="88" rx="20" fill="#fff"/><path fill="#fa3c56" d="M18 18h17l35 43v9H53L18 27zM45 18h25v32zM18 38l25 32H18z"/></svg></a>
  <a href="#" aria-label="Keynote"><svg viewBox="0 0 88 88"><defs><linearGradient id="gkey" x2="0" y2="1"><stop stop-color="#23c0fc"/><stop offset="1" stop-color="#1b68f0"/></linearGradient></defs><rect width="88" height="88" rx="20" fill="url(#gkey)"/><path fill="#f4f4f4" d="M22 12h44l4 24q0 3-3 3H21q-3 0-3-3zM42 39h4v33h11v4H31v-4h11z"/><path fill="#7c8aa0" d="M22 33h44v2H22z"/><circle cx="44" cy="23" r="8" fill="#f0803c"/><path fill="#3c9ae8" d="M44 15v8l-6 5a8 8 0 0 1 6-13z"/><path fill="#5bbf4a" d="M44 23l-6 5a8 8 0 0 0 13-1z"/></svg></a>
  <a href="#" aria-label="Numbers"><svg viewBox="0 0 88 88"><rect width="88" height="88" rx="20" fill="url(#ggreen)"/><g fill="#f3fdf3"><rect x="16" y="57" width="11" height="18" rx="2"/><rect x="31" y="41" width="11" height="34" rx="2"/><rect x="46" y="13" width="11" height="62" rx="2"/><rect x="61" y="29" width="11" height="46" rx="2"/></g></svg></a>
  <a href="#" aria-label="Pages"><svg viewBox="0 0 88 88"><defs><linearGradient id="gpage" x2="0" y2="1"><stop stop-color="#ffb02d"/><stop offset="1" stop-color="#fd8a1c"/></linearGradient></defs><rect width="88" height="88" rx="20" fill="url(#gpage)"/><path fill="#fff" d="M66 17q5-2 6 2 0 4-4 9L30 65l-15 9 6-16z"/><path d="M15 74l3-7M42 43l5 5" stroke="#777" stroke-width="2"/><path d="M22 74h52" stroke="#ffe2b8" stroke-width="3"/></svg></a>
  <a href="#" aria-label="App Store"><svg viewBox="0 0 88 88"><defs><linearGradient id="gstore" x2="0" y2="1"><stop stop-color="#19b4fa"/><stop offset="1" stop-color="#1a5fe0"/></linearGradient></defs><rect width="88" height="88" rx="20" fill="url(#gstore)"/><path d="M48 20L28 53M38 20l29 48M16 54h34M61 54h11M24 63l-3 5" fill="none" stroke="#fff" stroke-width="7" stroke-linecap="round"/></svg></a>
  <a href="#" aria-label="System Settings"><svg viewBox="0 0 88 88"><rect width="88" height="88" rx="20" fill="#b9bbbd"/><circle cx="44" cy="44" r="37" fill="#2c2c2e"/><circle cx="44" cy="44" r="32" fill="none" stroke="#a5a5a5" stroke-width="6" stroke-dasharray="2 2"/><circle cx="44" cy="44" r="27" fill="none" stroke="#999" stroke-width="5"/><circle cx="44" cy="44" r="12" fill="none" stroke="#888" stroke-width="3"/><path d="M44 44h28M44 44L30 20M44 44L30 68" stroke="#a5a5a5" stroke-width="5"/></svg></a>
  <hr>
  <a href="#" class="running" aria-label="Creative Cloud"><div class="rainbow"><svg viewBox="0 0 60 46"><use href="#cloud"/></svg></div></a>
  <a href="#" aria-label="QuickTime Player"><svg viewBox="0 0 88 88"><defs><linearGradient id="gqt" x2="0" y2="1"><stop stop-color="#4a4c52"/><stop offset="1" stop-color="#08080a"/></linearGradient><linearGradient id="gring" x2="0" y2="1"><stop stop-color="#dfe4f4"/><stop offset=".6" stop-color="#b6bac6"/><stop offset="1" stop-color="#a4a7ae"/></linearGradient><linearGradient id="glens" x2="0" y2="1"><stop stop-color="#1a7ce8"/><stop offset="1" stop-color="#1ad8fa"/></linearGradient></defs><rect width="88" height="88" rx="20" fill="url(#gqt)"/><circle cx="44" cy="44" r="29" fill="url(#glens)" stroke="url(#gring)" stroke-width="13"/><path d="M42 43l26 25" stroke="#b4b8c2" stroke-width="12" stroke-linecap="round"/><path fill="#9a9da4" d="M74 64l6 7v8h-9l-6-7z"/></svg></a>
  <a href="#" class="running" aria-label="After Effects"><svg viewBox="0 0 88 88"><rect width="88" height="88" rx="20" fill="#00005b"/><text x="44" y="62" text-anchor="middle" font-size="54" font-weight="600" fill="#9b9bff">Ae</text></svg></a>
  <hr>
  <a href="#" class="trash" aria-label="Trash"><svg viewBox="0 0 80 104"><defs><linearGradient id="gtrash"><stop stop-color="#8d9093"/><stop offset=".5" stop-color="#56595b"/><stop offset="1" stop-color="#85888b"/></linearGradient></defs><path fill="#eee" d="M4 22L10 6l14-4 10 5 12-6 14 2 10 8 6 13-36 8z"/><path fill="#7d7f80" d="M12 8l10 10M22 4l6 16-14-2zM50 6l-8 14 16-4z"/><path fill="#d0672e" d="M52 14l8-4 2 10z"/><path fill="#3a8ad0" d="M28 10l7 6-8 4z"/><path fill="url(#gtrash)" d="M2 16q8 10 38 10t38-10l-10 82q-1 6-28 6t-28-6z"/></svg></a>
</footer>

</body>
</html>
```
FILE: styles.css
```css
* { box-sizing: border-box; }

body, html {
  height: 100%;
  margin: 0;
}

body {
  display: flex;
  flex-direction: column;
  overflow: hidden;
  font-family: "Noto Sans", "Open Sans", sans-serif;
  font-size: 21px;
  line-height: 28px;
  color: #a0a0a0;
  background:
    linear-gradient(90deg, #6a5020, #5e4c1c 4%, #4c201c 8%, #5c231f 34%, #83807f 38%, #8e8c8e 52%, #858789 74%, #453029 79%, #5c3d34 90%, #74463e);
}

button, input, select {
  font: inherit;
  color: inherit;
  background: none;
  border: 0;
  padding: 0;
  margin: 0;
}
a { color: #3d9be9; text-decoration: none; }
i { font-style: normal; }
h1, h2, p, ul, dl, dd { margin: 0; padding: 0; font-size: inherit; font-weight: normal; }
svg { display: block; flex: none; }
text { font-family: "Noto Sans", "Open Sans", sans-serif; }
.sprite { position: absolute; width: 0; height: 0; }

input[type=checkbox] {
  appearance: none;
  flex: none;
  width: 24px;
  height: 24px;
  border: 3px solid #8f8f8f;
  border-radius: 4px;
}
input[type=checkbox]:disabled { border-color: #484848; }
input[type=checkbox]:checked {
  background: #8f8f8f url("data:image/svg+xml,%3Csvg xmlns='http://www.w3.org/2000/svg' viewBox='0 0 18 18'%3E%3Cpath d='M3 9l4 5 8-11' fill='none' stroke='%23222' stroke-width='3'/%3E%3C/svg%3E") center / 18px no-repeat;
}
select {
  appearance: none;
  color: #c4c4c4;
  background: #1d1d1d url("data:image/svg+xml,%3Csvg xmlns='http://www.w3.org/2000/svg' viewBox='0 0 16 12'%3E%3Cpath d='M1 2l7 7 7-7' fill='none' stroke='%23b4b4b4' stroke-width='2'/%3E%3C/svg%3E") right 8px center / 16px 12px no-repeat;
  border: 2px solid #333;
  padding-left: 10px;
}

/* menu bar */
.menubar {
  flex: none;
  display: flex;
  justify-content: space-between;
  height: 76px;
  padding: 0 34px 2px 40px;
  font-family: Inter, sans-serif;
  font-size: 25px;
  font-weight: 500;
  color: #fff;
  background: linear-gradient(90deg, #846a4b, #7b6147 15%, #6a503c 28%, #674b3d 34%, #5a4734 38%, #472f27 52%, #3f2722 66%, #422722 76%, #55382b);
  text-shadow: 0 2px 4px rgba(0, 0, 0, 0.3);
}
.menus { display: flex; align-items: center; gap: 42px; }
.menus .app { font-size: 26px; font-weight: 700; }
.status { display: flex; align-items: center; gap: 38px; }
.status time { font-size: 26px; margin-left: -6px; }

/* application window */
.window {
  flex: 1;
  min-height: 0;
  display: flex;
  flex-direction: column;
  background: #171717;
  border-radius: 20px;
  overflow: hidden;
}
.titlebar {
  flex: none;
  display: grid;
  grid-template-columns: 1fr auto 1fr;
  align-items: center;
  height: 39px;
  padding: 0 10px;
  background: #e8e8e8;
  border-bottom: 1px solid #000;
}
.titlebar h1 {
  font-family: Inter, sans-serif;
  font-size: 22px;
  color: #a8a8a8;
}
.lights { display: flex; gap: 12px; }
.lights i {
  width: 18px;
  height: 18px;
  border-radius: 50%;
  border: 1px solid #b4b4b4;
  background: #d0d0d0;
}
.lights .edited { background: radial-gradient(#444 3px, #d0d0d0 4px); }

.toolbar {
  flex: none;
  display: flex;
  align-items: center;
  height: 50px;
  padding-right: 10px;
  background: #282828;
}
.grip {
  width: 6px;
  height: 38px;
  margin: 0 8px 0 10px;
  background: repeating-linear-gradient(#3c3c3c 0 2px, #282828 2px 5px);
}
.tools { display: flex; }
.tools + .tools::before {
  content: "";
  width: 2px;
  height: 42px;
  margin: 0 6px;
  background: #222;
}
.tools button { position: relative; width: 50px; height: 44px; padding: 4px 7px; }
.tools svg, .axes svg, .snap svg { width: 34px; height: 34px; fill: #b4b4b4; }
.tools.dim svg { fill: #4a4a4a; }
.tools .on, .snap .on {
  background: #151515;
  border: 2px solid #333;
  border-radius: 4px;
}
.tools .on { width: 46px; margin: 0 2px; padding: 2px 4px; }
.tools .fly::after {
  content: "";
  position: absolute;
  right: 4px;
  bottom: 2px;
  border: 4px solid;
  border-color: transparent #8a8a8a #8a8a8a transparent;
}
.axes {
  display: flex;
  align-items: center;
  margin-left: 46px;
  padding: 0 12px 0 40px;
  border-left: 2px solid #1e1e1e;
}
.axes button { padding: 5px; border: 1px solid transparent; border-radius: 4px; }
.axes .axis { border-color: #333; }
.axes .navy { fill: #1d4166; }
.axes .faint { fill: #404040; }
.snap {
  display: flex;
  align-items: center;
  padding-left: 14px;
  border-left: 2px solid #1e1e1e;
}
.snap input { width: 27px; height: 27px; margin-right: 8px; }
.snap button { padding: 4px; }
.snap label, .workspaces { padding-top: 2px; }
.snap label { margin-right: 12px; }
.snap .on { margin-left: 8px; padding: 3px; }

.workspaces {
  display: flex;
  align-items: center;
  gap: 86px;
  margin-left: auto;
  padding-left: 44px;
  border-left: 2px solid #151515;
  height: 100%;
}
.workspaces .current { display: flex; align-items: center; gap: 28px; color: #3d9be9; }
.workspaces .last { margin-left: -42px; }
.workspaces .overflow { margin-left: -8px; }
.overflow { color: #b4b4b4; }
.sync { margin: 0 24px 0 20px; padding-left: 12px; border-left: 2px solid #333; }
.searchbox {
  display: flex;
  align-items: center;
  gap: 10px;
  height: 38px;
  padding: 0 10px;
  background: #151515;
  border: 2px solid #323232;
  border-radius: 4px;
  color: #b4b4b4;
}
.searchbox input { flex: 1; min-width: 0; outline: 0; }
.searchbox input::placeholder { color: #b8b8b8; opacity: 1; }
.help { width: 388px; gap: 18px; }

/* panels */
.workarea {
  flex: 1;
  min-height: 0;
  display: grid;
  grid-template-columns: 642px minmax(0, 1fr) 414px;
  grid-template-rows: 284px minmax(0, 1fr) 680px;
  grid-template-areas:
    "project viewer info"
    "project viewer effects"
    "queue queue align";
  gap: 8px;
  padding-top: 4px;
}
.panel {
  display: flex;
  flex-direction: column;
  min-width: 0;
  min-height: 0;
  background: #282828;
}
.project { grid-area: project; }
.viewer { grid-area: viewer; }
.info { grid-area: info; }
.effects { grid-area: effects; }
.queue { grid-area: queue; }
.align { grid-area: align; }

.tabs { flex: none; display: flex; height: 52px; padding-left: 24px; }
.tab {
  display: flex;
  align-items: center;
  gap: 20px;
  padding: 12px 0 4px 2px;
  border-bottom: 4px solid transparent;
  white-space: nowrap;
}
.tab svg { color: #b4b4b4; }
.tab.active { color: #d0d0d0; border-color: #b4b4b4; }
.tab.solo { color: #d0d0d0; }
.tab.wide { margin-left: 70px; }
.swatch { flex: none; display: block; width: 20px; height: 20px; background: #a79674; }
.yellow { background: #e6da48; }
.aqua { background: #a8ccc6; }

/* project */
.blank { height: 226px; }
.project .searchbox { margin: 0 14px 12px 14px; height: 40px; }
table { border-collapse: collapse; table-layout: fixed; width: 100%; flex: none; }
th, td { padding: 0; text-align: left; font-weight: normal; white-space: nowrap; }
thead tr { height: 40px; border-top: 2px solid #000; border-bottom: 2px solid #000; background: #252525; }
th { font-size: 18px; }
th + th {
  padding-left: 11px;
  background: linear-gradient(#0c0c0c, #0c0c0c) left center / 2px 24px no-repeat;
}
.files tbody tr { height: 38px; border-bottom: 2px solid #222; background: #262626; }
.c-twirl { width: 34px; }
.c-name { width: 205px; }
.c-label { width: 42px; }
.c-type { width: 154px; }
.c-size { width: 95px; }
.c-rate { width: 76px; }
.sort { display: flex; align-items: center; justify-content: space-between; padding-right: 10px; }
.file { display: flex; align-items: center; gap: 6px; padding-left: 2px; color: #909090; }
.files td:nth-child(4) { padding-left: 13px; }
.files .num { padding-right: 8px; text-align: right; }
.files .size { text-align: right; padding-right: 3px; }
.files .flow { padding-left: 4px; background: #232323; }
.tagcell svg, .tagcell .swatch { margin: auto; }
th.tagcell { padding-left: 2px; color: #b4b4b4; }
.twirl svg { margin: auto; color: #b4b4b4; }
.files .twirl { padding-right: 4px; }
.files-rest { flex: 1; }
.project-foot {
  display: flex;
  align-items: center;
  height: 36px;
  gap: 17px;
  padding-left: 12px;
  border-top: 2px solid #000;
}
.bpc {
  width: 88px;
  height: 30px;
  font-size: 18px;
  line-height: 26px;
  background: #1a1a1a;
  border: 2px solid #323232;
  border-radius: 4px;
}
.hscroll { flex: 1; margin-right: 36px; background: #1f1f1f; height: 34px; padding: 1px; }
.hscroll i { display: block; width: 82px; height: 30px; border-radius: 15px; background: #333; }

/* composition viewer */
.viewer .tabs { padding-left: 22px; }
.comp-tab b { color: #3d9be9; font-weight: normal; }
.comp-tab { padding-left: 0; gap: 18px; }
.comp-tab svg:first-child { color: #909090; }
.comp-tab .swatch { margin-bottom: 6px; }
.viewer .footage { margin-left: 70px; color: #8c8c8c; }
.viewer .layer { margin-left: 140px; color: #8c8c8c; }
.tab em { font-style: normal; color: #a0a0a0; margin-left: -14px; }
.crumbs { flex: none; height: 56px; padding: 8px 0 0 40px; border-bottom: 2px solid #000; }
.crumbs button {
  width: 212px;
  height: 36px;
  padding-left: 15px;
  text-align: left;
  color: #3d9be9;
  background: #151515;
  border: 2px solid #2e2e2e;
  border-radius: 4px;
}
.stage {
  flex: 1;
  min-height: 0;
  padding: 0 232px;
  background: #232323;
}
.canvas { width: 100%; height: 100%; }
.viewer-foot {
  flex: none;
  display: flex;
  align-items: center;
  height: 52px;
  padding: 8px 0 0 12px;
  gap: 12px;
  background: linear-gradient(#282828 8px, #1a1a1a 8px, #1a1a1a 10px, #282828 10px);
}
.viewer-foot select { height: 38px; border-radius: 4px; padding-left: 8px; }
.zoom { width: 136px; }
.res { width: 174px; }
.bar { width: 2px; height: 30px; background: #202020; }
.bar.wide { margin: 0 3px; }
.viewer-foot button svg { width: 32px; height: 32px; }
.viewer-foot .pressed { background: #151515; border-radius: 4px; padding: 4px 6px; margin: 0 -6px; }
.viewer-foot .expo { margin: 0 20px 0 -2px; }
.viewer-foot .timecode { width: 136px; height: 38px; margin-left: 2px; background: #1d1d1d; border: 2px solid #333; border-radius: 4px; color: #b0b0b0; }

/* info */
.readout {
  display: grid;
  grid-template-columns: 40px 138px 30px 1fr;
  gap: 10px;
  height: 122px;
  margin: 12px 18px 0 12px;
  padding: 0 0 8px 4px;
  border-bottom: 2px solid #303030;
}
.black { width: 40px; height: 40px; margin-top: 26px; background: #000; }
.readout dl { display: grid; grid-template-columns: 38px 1fr; align-content: start; grid-auto-rows: 27px; line-height: 28px; }
.rgba { border-right: 2px solid #303030; }
.readout dl.rgba { color: #8c8c8c; }
.readout .xy { grid-template-columns: 34px 1fr; }
.cross { margin: 48px 0 0 9px; }
.info p { padding: 4px 16px; }

/* effects & presets */
.effects .tabs { padding-left: 46px; align-items: stretch; }
.effects .cut { margin-left: 42px; border-right: 2px solid #222; }
.effects .overflow { margin-left: auto; padding-right: 8px; }
.effects .searchbox { margin: 10px 14px 6px 12px; height: 38px; }
.effect-list { list-style-type: none; flex: 1; min-height: 0; margin-right: 36px; border-right: 2px solid #242424; }
.effect-list li { display: flex; align-items: center; gap: 9px; height: 34px; padding-left: 11px; }
.effect-list svg { width: 12px; height: 14px; color: #b4b4b4; }
.effects-foot {
  display: flex;
  justify-content: flex-end;
  height: 36px;
  margin-right: 36px;
  padding: 4px 12px 0 0;
  border-top: 2px solid #000;
  border-right: 2px solid #000;
}

/* render queue */
.queue-tab { padding-left: 0; gap: 16px; }
.queue-tab svg:first-child { color: #909090; }
.queue-tab svg + svg { margin-left: 6px; }
.comp-name { margin-left: 70px; gap: 22px; }
.comp-name + .comp-name { margin-left: 108px; }
.current-render {
  display: flex;
  align-items: center;
  gap: 30px;
  height: 80px;
  margin: 20px 35px 0 20px;
}
.progress {
  flex: 1;
  display: flex;
  align-items: center;
  height: 80px;
  padding: 2px 35px 0 13px;
  background: #171717;
  border-radius: 12px 12px 0 0;
  color: #5a5a5a;
}
.progress b { font-size: 25px; font-weight: 500; }
.progress svg { color: #b4b4b4; }
.progress .title { margin-left: 14px; }
.progress .track { flex: 1; height: 36px; margin-left: 31px; border-radius: 18px; background: #232323; }
.progress .pct { width: 134px; margin-left: 30px; }
.progress .count { width: 128px; margin-left: 30px; }
.progress .pill {
  display: flex;
  align-items: center;
  gap: 10px;
  width: 112px;
  height: 52px;
  padding-left: 8px;
  margin-left: 60px;
  font-size: 25px;
  color: #5a5a5a;
  background: #292929;
  border-radius: 26px;
}
.rule { width: 3px; height: 36px; margin: 0 30px 0 32px; background: #333; }
.progress .elapsed { width: 168px; font-weight: 600; }
.progress .clock { width: 168px; margin-left: 38px; }
.progress .rule { flex: none; }
.render, .ame {
  display: flex;
  align-items: center;
  gap: 12px;
  height: 52px;
  padding: 0 12px;
  font-size: 24px;
  border: 3px solid #e8e8e8;
  border-radius: 26px;
}
.render { color: #f0f0f0; font-weight: 500; }
.ame { border-color: #8c8c8c; gap: 7px; }

.jobs { font-size: 20px; }
.jobs tr { height: 32px; }
.jobs thead tr { height: 40px; }
.jobs tbody tr { border-bottom: 2px solid #242424; background: #262626; }
.jobs .item { background: #1f1f1f; border: 0; }
.j-twirl { width: 35px; }
.j-render { width: 89px; }
.j-label { width: 43px; }
.j-no { width: 49px; }
.j-name { width: 228px; }
.j-status { width: 201px; }
.j-start { width: 260px; }
.j-time { width: 260px; }
.j-comment { width: 179px; }
.j-notify { width: 91px; }
.item td { padding-left: 5px; }
.item td:nth-child(5) { padding-left: 11px; }
.item .twirl { padding: 0 0 0 10px; }
.item .tagcell { padding: 0 2px 0 0; }
.jobs b { font-weight: 600; color: #909090; }
.jobs .item b { font-size: 19px; }
.jobs input { display: block; }
.jobs .check { padding-left: 33px; }
.jobs .box { padding-left: 34px; }
.sub {
  display: grid;
  grid-template-columns: 24px 156px 451px 173px 1fr;
  column-gap: 8px;
  align-items: center;
  height: 30px;
  padding-left: 45px;
  font-size: 19px;
  line-height: 26px;
}
.sub svg { color: #b4b4b4; }
.sub > b { justify-self: end; }
.sub .picked { background: #4c4c4c; }
.choice { display: flex; align-items: center; gap: 4px; }
.mini { display: grid; place-items: center; width: 40px; height: 28px; background: #1a1a1a; border: 2px solid #323232; }
.mini.off { background: #252525; border-color: #252525; }
.off svg { color: #484848; }
.out { display: flex; justify-content: flex-end; align-items: center; gap: 2px; }
.out b { margin-left: 7px; }
.out label { color: #909090; font-weight: 600; }
.sub select { width: 272px; height: 28px; font-size: 21px; line-height: 24px; padding-left: 6px; }
.step { position: relative; width: 30px; height: 30px; background: #161616; border: 2px solid #323232; color: #b4b4b4; }
.step.off { background: #252525; border-color: #2e2e2e; color: #3c3c3c; }
.plus, .minus { display: block; width: 20px; height: 20px; margin: auto; background: linear-gradient(currentColor, currentColor) center / 20px 3px no-repeat; }
.plus { background: linear-gradient(currentColor, currentColor) center / 20px 3px no-repeat, linear-gradient(currentColor, currentColor) center / 3px 20px no-repeat; }
.queue-foot {
  display: grid;
  grid-template-columns: 506px 460px 595px 1fr auto;
  align-items: center;
  height: 50px;
  margin-top: auto;
  padding: 2px 42px 0 20px;
  background: #191919;
  font-size: 25px;
}
.queue-foot b { font-weight: 600; }
.notify { display: flex; align-items: center; gap: 8px; font-size: 24px; }
.notify input { width: 28px; height: 28px; }

/* align */
.align-to { display: flex; align-items: center; height: 36px; margin: 12px 10px 10px 13px; }
.align-to select {
  flex: 1;
  height: 36px;
  margin-left: 22px;
  color: #5a5a5a;
  opacity: 1;
  border-color: #262626;
  background: #262626 url("data:image/svg+xml,%3Csvg xmlns='http://www.w3.org/2000/svg' viewBox='0 0 16 12'%3E%3Cpath d='M1 2l7 7 7-7' fill='none' stroke='%23444' stroke-width='2'/%3E%3C/svg%3E") right 4px center / 16px 12px no-repeat;
}
.align-row { display: flex; justify-content: space-between; padding: 0 14px 0 22px; }
.align-row svg { width: 36px; height: 36px; fill: #424242; }
.align h2 { margin: 12px 12px 6px; padding-top: 4px; border-top: 2px solid #303030; }

/* alert */
.alert {
  position: fixed;
  top: 953px;
  left: 50%;
  width: 990px;
  transform: translateX(-50%);
  background: #262626;
  border: 1px solid #555;
  border-radius: 20px;
  overflow: hidden;
  box-shadow: 0 36px 80px rgba(0, 0, 0, 0.4), 0 0 4px rgba(0, 0, 0, 0.4);
}
.alert h2 {
  height: 58px;
  padding-top: 14px;
  text-align: center;
  font-family: Inter, sans-serif;
  font-size: 26px;
  font-weight: 700;
  color: #3c3c3c;
  background: #c8c8c8;
  border-bottom: 2px solid #000;
}
.alert-body { display: flex; gap: 40px; padding: 30px 30px 0 31px; color: #c8c8c8; }
.alert-body p { line-height: 30px; }
.alert-buttons { display: flex; justify-content: flex-end; gap: 20px; padding: 29px 29px 28px; }
.alert-buttons button { width: 160px; height: 40px; border: 2px solid #8a8a8a; border-radius: 20px; }
.alert-buttons .ok { color: #fff; background: #2d8ceb; border-color: #2d8ceb; font-weight: 600; }

/* dock */
.dock {
  flex: none;
  display: flex;
  height: 138px;
  margin: 6px 98px 9px 99px;
  padding: 18px 4px 0;
  border: 2px solid rgba(255, 255, 255, 0.25);
  border-radius: 44px;
  background: linear-gradient(90deg, #60401c, #5f2824 6%, #582320 30%, #5c5a58 34%, #4d4b45 38%, #565654 42%, #4a3c37 48%, #707173 55%, #787878 63%, #646767 72%, #412b25 76%, #4a2e26 90%, #52312e);
}
.dock a { flex: 1; display: flex; flex-direction: column; align-items: center; }
.dock a > svg, .rainbow, .calendar { width: 88px; height: 88px; border-radius: 20px; }
.dock .running::after {
  content: "";
  width: 8px;
  height: 8px;
  margin-top: 18px;
  border-radius: 50%;
  background: #e0c8c0;
}
.dock hr { width: 2px; height: 102px; margin: 0 26px; border: 0; background: rgba(255, 255, 255, 0.3); }
.calendar {
  text-align: center;
  font-family: Inter, sans-serif;
  color: #222;
  background: linear-gradient(#f4524d 27px, #f8f8f7 27px);
}
.calendar span { display: block; padding-top: 3px; font-size: 16px; line-height: 24px; font-weight: 600; color: #fff; }
.calendar b { display: block; font-size: 48px; line-height: 59px; font-weight: 300; }
.rainbow {
  display: grid;
  place-items: center;
  background: conic-gradient(from 0deg, #fd1c08, #ff8a0a 70deg, #f5d21c 110deg, #58e05a 150deg, #3c8cf8 210deg, #b44cf0 250deg, #fc18a0 300deg, #fd1c08);
}
.rainbow svg { width: 68px; height: 52px; }
.dock .trash { margin-top: -8px; }
.dock .trash svg { width: 78px; height: 102px; border-radius: 0; }
```
